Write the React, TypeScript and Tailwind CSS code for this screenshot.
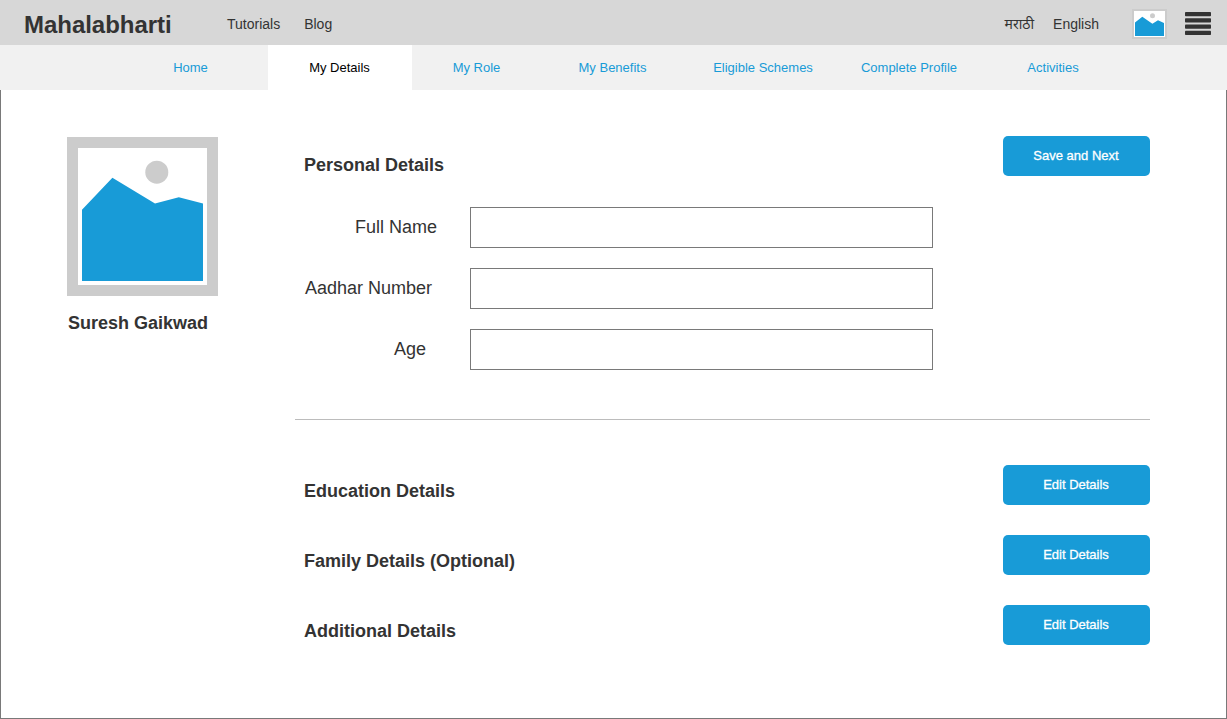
const tabs = [
  { label: "Home", width: "w-[155px]" },
  { label: "My Details", width: "w-36", active: true },
  { label: "My Role", width: "w-[129px]" },
  { label: "My Benefits", width: "w-[143px]" },
  { label: "Eligible Schemes", width: "w-[158px]" },
  { label: "Complete Profile", width: "w-[134px]" },
  { label: "Activities", width: "w-[154px]" },
];

const fields = [
  { label: "Full Name", id: "full-name", inset: "pl-[60px]" },
  { label: "Aadhar Number", id: "aadhar", inset: "pl-2.5" },
  { label: "Age", id: "age", inset: "pl-[99px]" },
];

const sections = ["Education Details", "Family Details (Optional)", "Additional Details"];

function Thumbnail() {
  return (
    <svg className="ml-[33px] block shrink-0" width="35" height="30" viewBox="0 0 35 30" aria-hidden="true">
      <rect width="35" height="30" fill="#cccccc" />
      <rect x="2" y="2" width="31" height="26" fill="#ffffff" />
      <circle cx="20.5" cy="6.7" r="2.5" fill="#cccccc" />
      <path d="M3 13.4 10.3 7.7 20.4 14.7 26 11.3 32 14V27H3Z" fill="#189bd7" />
    </svg>
  );
}

function MenuIcon() {
  return (
    <svg className="block" width="26" height="24" viewBox="0 0 26 24" fill="#333333" aria-hidden="true">
      <rect width="26" height="4.2" rx="0.8" />
      <rect y="6.2" width="26" height="4.4" rx="0.8" />
      <rect y="12.4" width="26" height="4.4" rx="0.8" />
      <rect y="18.7" width="26" height="4.3" rx="0.8" />
    </svg>
  );
}

function Portrait() {
  return (
    <svg className="block" width="151" height="159" viewBox="0 0 151 159" aria-hidden="true">
      <rect width="151" height="159" fill="#cccccc" />
      <rect x="11" y="11" width="129" height="137" fill="#ffffff" />
      <circle cx="89.8" cy="35.2" r="11.5" fill="#cccccc" />
      <path d="M15 72.8 45.4 40.8 88 66.5 111.8 60.2 136 66.5V144H15Z" fill="#189bd7" />
    </svg>
  );
}

function ActionButton({ label }: { label: string }) {
  return (
    <button className="h-10 w-[147px] shrink-0 rounded-[5px] bg-[#189bd7] pr-px pb-px text-[13px] leading-5 text-white [-webkit-text-stroke:0.3px_white]">
      {label}
    </button>
  );
}

export default function App() {
  return (
    <div className="flex h-[719px] w-[1227px] flex-col bg-white font-['Liberation_Sans',Arial,'Noto_Sans',sans-serif] text-[#333333]">
      <header className="flex h-[45px] shrink-0 items-center bg-[#d7d7d7] pr-4 pl-6">
        <h1 className="w-[203px] pt-1 text-2xl font-bold tracking-[-0.03px]">Mahalabharti</h1>
        <nav className="flex flex-1 gap-6 pt-[3px] text-sm">
          <a>Tutorials</a>
          <a>Blog</a>
        </nav>
        <div className="flex items-center gap-[19px] pt-[3px] text-sm">
          <a lang="mr">मराठी</a>
          <a>English</a>
        </div>
        <div className="flex items-center pt-[3px]">
          <Thumbnail />
          <button aria-label="Menu" className="ml-[18px]">
            <MenuIcon />
          </button>
        </div>
      </header>

      <nav className="flex h-[45px] shrink-0 bg-[#f1f1f1] pl-[113px] text-[13px]">
        {tabs.map((t) => (
          <a
            key={t.label}
            className={`flex items-center justify-center ${t.width} ${t.active ? "bg-white pr-px text-black" : "text-[#189bd7]"}`}
          >
            {t.label}
          </a>
        ))}
      </nav>

      <main className="flex flex-1 border-x border-b border-[#797979] pr-[76px] pl-[66px] text-lg">
        <aside className="w-[228px] shrink-0 pt-[47px]">
          <Portrait />
          <p className="mt-3.5 pl-px leading-[26px] font-bold">Suresh Gaikwad</p>
        </aside>

        <div className="flex-1 pt-[46px]">
          <section className="h-[284px] border-b border-[#bcbcbc]">
            <div className="flex h-[71px] items-start justify-between pl-[9px]">
              <h2 className="pt-[15px] font-bold">Personal Details</h2>
              <ActionButton label="Save and Next" />
            </div>
            <div className="flex flex-col gap-5">
              {fields.map((f) => (
                <div key={f.id} className="flex items-center">
                  <label htmlFor={f.id} className={`w-[175px] pb-0.5 ${f.inset}`}>
                    {f.label}
                  </label>
                  <input id={f.id} className="h-[41px] w-[463px] border border-[#797979] bg-white px-2 outline-none" />
                </div>
              ))}
            </div>
          </section>

          <div className="flex flex-col gap-[30px] pt-[45px]">
            {sections.map((s) => (
              <section key={s} className="flex items-start justify-between pl-[9px]">
                <h2 className="pt-3 font-bold">{s}</h2>
                <ActionButton label="Edit Details" />
              </section>
            ))}
          </div>
        </div>
      </main>
    </div>
  );
}
